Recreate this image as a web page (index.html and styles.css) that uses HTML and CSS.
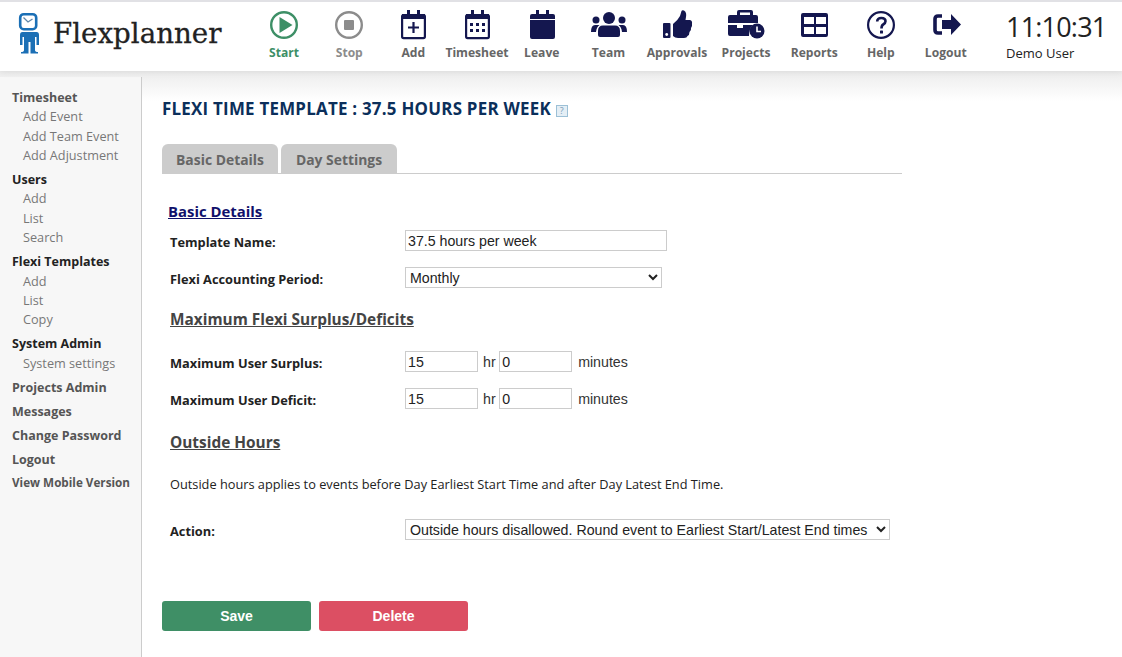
FILE: index.html
```html
<!DOCTYPE html>
<html lang="en">
<head>
<meta charset="utf-8">
<title>Flexplanner</title>
<link rel="stylesheet" href="styles.css">
</head>
<body>
<header class="topbar">
  <div class="brand">
    <svg class="logo" width="22" height="42" viewBox="0 0 22 42">
      <rect x="2.200" y="2.200" width="16" height="15" rx="3.500" fill="#fff" stroke="#1b6fb5" stroke-width="2.600"/>
      <path d="M5.500 5.500 L10 10 L14.500 7" stroke="#5f86a8" stroke-width="1.300" fill="none"/>
      <path d="M4.500 20H18.500Q21 20 21 23V33H18.500V25H17V38Q17 40 20 40V41.500H12.500V30H10.500V41.500H3V40Q6 40 6 38V25H4.500V33H2V23Q2 20 4.500 20Z" fill="#1b6fb5"/>
    </svg>
    <span class="brand-name">Flexplanner</span>
  </div>
  <nav class="mainnav">
    <a class="nav-item start"><svg viewBox="0 0 38 30"><circle cx="19" cy="15" r="12.800" fill="none" stroke="#3d8f66" stroke-width="2.400"/><path d="M14.500 7L27.500 15 14.500 23Z" fill="#3d8f66"/></svg><span>Start</span></a>
    <a class="nav-item stop"><svg viewBox="0 0 38 30"><circle cx="19" cy="15" r="12.800" fill="none" stroke="#8c8c8c" stroke-width="2.400"/><rect x="14" y="10" width="10" height="10" rx="1" fill="#8c8c8c"/></svg><span>Stop</span></a>
    <a class="nav-item"><svg viewBox="0 0 38 30"><path d="M13 0h3v5h-3zM23 0h3v5h-3z" fill="#14174f"/><rect x="8.100" y="5.100" width="22.800" height="23" rx="1.500" fill="none" stroke="#14174f" stroke-width="2.200"/><path d="M8 4h23v5H8z" fill="#14174f"/><path d="M19.500 12v11M14 17.500h11" stroke="#14174f" stroke-width="2.200"/></svg><span>Add</span></a>
    <a class="nav-item"><svg viewBox="0 0 38 30"><path d="M13 0h3v5h-3zM23 0h3v5h-3z" fill="#14174f"/><rect x="8.100" y="5.100" width="22.800" height="23" rx="1.500" fill="none" stroke="#14174f" stroke-width="2.200"/><path d="M8 4h23v5H8z" fill="#14174f"/><path d="M12 13h3v3h-3zM18 13h3v3h-3zM24 13h3v3h-3zM12 19h3v3h-3zM18 19h3v3h-3zM24 19h3v3h-3z" fill="#14174f"/></svg><span>Timesheet</span></a>
    <a class="nav-item"><svg viewBox="0 0 38 30"><path d="M13 0h3v5h-3zM23 0h3v5h-3z" fill="#14174f"/><path d="M9 4h21a2 2 0 0 1 2 2v3H7V6a2 2 0 0 1 2-2z" fill="#14174f"/><path d="M7 10h25v17a2 2 0 0 1-2 2H9a2 2 0 0 1-2-2z" fill="#14174f"/></svg><span>Leave</span></a>
    <a class="nav-item"><svg viewBox="0 0 38 30"><circle cx="19" cy="8" r="6" fill="#14174f"/><circle cx="6" cy="10" r="3.500" fill="#14174f"/><circle cx="32" cy="10" r="3.500" fill="#14174f"/><path d="M10 27Q8 27 8 25V21Q8 15.500 13 15.500H25Q30 15.500 30 21V25Q30 27 28 27Z" fill="#14174f"/><path d="M1 22Q1 15 5 15H9.500Q6.500 17 6 22ZM37 22Q37 15 33 15H28.500Q31.500 17 32 22Z" fill="#14174f"/></svg><span>Team</span></a>
    <a class="nav-item"><svg viewBox="0 0 38 30"><rect x="5" y="13" width="7.500" height="15" rx="1" fill="#14174f"/><circle cx="8.700" cy="24.500" r="1.400" fill="#fff"/><path d="M15 14Q20 10 22 6L23.500 1Q24 0 26 .5 29.500 2 27.500 10H32Q34.500 10.500 34 14 34.500 16 33 18 33.500 20.500 31.500 22 31.500 25 29.500 26 29 28 26 28H20Q17 28 15 26Z" fill="#14174f"/></svg><span>Approvals</span></a>
    <a class="nav-item"><svg viewBox="0 0 38 30"><path d="M10 5V2Q10 0 12 0H24Q26 0 26 2V5H29Q31 5 31 7V13H1V7Q1 5 3 5ZM13 5H23V2.500H13Z" fill="#14174f" fill-rule="evenodd"/><path d="M1 15H10V18H16V15H26Q22 18 22 26H3Q1 26 1 24Z" fill="#14174f"/><circle cx="30" cy="21" r="7.500" fill="#14174f"/><path d="M30 16.500V21.500H34" stroke="#fff" stroke-width="1.600" fill="none"/></svg><span>Projects</span></a>
    <a class="nav-item"><svg viewBox="0 0 38 30"><path d="M8 3H31Q33 3 33 5V25Q33 27 31 27H8Q6 27 6 25V5Q6 3 8 3ZM9 7V14H19V7ZM21 7V14H31V7ZM9 17V24H19V17ZM21 17V24H31V17Z" fill="#14174f" fill-rule="evenodd"/></svg><span>Reports</span></a>
    <a class="nav-item"><svg viewBox="0 0 38 30"><circle cx="19" cy="15" r="12.900" fill="none" stroke="#14174f" stroke-width="2.200"/><path d="M15.200 11.500Q15.200 8 19.300 8 23.500 8 23.500 11.300 23.500 13.300 21.200 14.500 19.500 15.400 19.500 18.500" fill="none" stroke="#14174f" stroke-width="2.600"/><rect x="18" y="20.500" width="3" height="3" rx=".6" fill="#14174f"/></svg><span>Help</span></a>
    <a class="nav-item"><svg viewBox="0 0 38 30"><path d="M15 6H11Q8 6 8 9V20Q8 23 11 23H15" fill="none" stroke="#14174f" stroke-width="3.600"/><path d="M15 10H24V4L34 14.500 24 25V19H15Z" fill="#14174f"/></svg><span>Logout</span></a>
  </nav>
  <div class="clock">
    <div class="time">11:10:31</div>
    <div class="user">Demo User</div>
  </div>
</header>

<div class="shell">
  <aside class="sidebar">
    <div class="group"><a class="head muted">Timesheet</a><a>Add Event</a><a>Add Team Event</a><a>Add Adjustment</a></div>
    <div class="group"><a class="head">Users</a><a>Add</a><a>List</a><a>Search</a></div>
    <div class="group"><a class="head">Flexi Templates</a><a>Add</a><a>List</a><a>Copy</a></div>
    <div class="group"><a class="head">System Admin</a><a>System settings</a></div>
    <div class="group"><a class="head muted">Projects Admin</a></div>
    <div class="group"><a class="head muted">Messages</a></div>
    <div class="group"><a class="head muted">Change Password</a></div>
    <div class="group last-link"><a class="head muted">Logout</a></div>
    <div class="group"><a class="head muted small">View Mobile Version</a></div>
  </aside>

  <main class="content">
    <h1 class="title">FLEXI TIME TEMPLATE : 37.5 HOURS PER WEEK <span class="qmark">?</span></h1>
    <div class="tabs">
      <a class="tab">Basic Details</a>
      <a class="tab">Day Settings</a>
    </div>
    <form class="form">
      <h2 class="sec-basic">Basic Details</h2>
      <div class="row r-name"><label>Template Name:</label><input class="text name" type="text" value="37.5 hours per week"></div>
      <div class="row r-period"><label>Flexi Accounting Period:</label><select class="period"><option>Monthly</option></select></div>
      <h3 class="sec sec-max">Maximum Flexi Surplus/Deficits</h3>
      <div class="row r-sur"><label>Maximum User Surplus:</label><input class="text num" type="text" value="15"><span class="unit">hr</span><input class="text num" type="text" value="0"><span class="unit min">minutes</span></div>
      <div class="row r-def"><label>Maximum User Deficit:</label><input class="text num" type="text" value="15"><span class="unit">hr</span><input class="text num" type="text" value="0"><span class="unit min">minutes</span></div>
      <h3 class="sec sec-out">Outside Hours</h3>
      <p class="note">Outside hours applies to events before Day Earliest Start Time and after Day Latest End Time.</p>
      <div class="row r-action"><label>Action:</label><select class="action"><option>Outside hours disallowed. Round event to Earliest Start/Latest End times</option></select></div>
      <div class="buttons">
        <button type="button" class="btn save">Save</button>
        <button type="button" class="btn delete">Delete</button>
      </div>
    </form>
  </main>
</div>
</body>
</html>
```

FILE: styles.css
```css
* { box-sizing: border-box; }
html, body { margin: 0; height: 100%; }
body {
  font-family: "Open Sans", "Noto Sans", sans-serif;
  background: #fff;
  color: #222;
  overflow: hidden;
}
.topbar {
  height: 71px;
  border-top: 2px solid #e1e1e5;
  background: #fff;
  display: flex;
  position: relative;
  z-index: 2;
  box-shadow: 0 2px 6px rgba(0,0,0,.06);
}
.brand { width: 251px; display: flex; align-items: flex-start; padding: 10px 0 0 18px; }
.logo { display: block; flex: none; }
.brand-name {
  font-family: "DejaVu Serif", serif;
  font-size: 27.700px;
  line-height: 38px;
  color: #222;
  margin: 3px 0 0 13px;
  -webkit-text-stroke: .3px #222;
}
.mainnav {
  width: 727px;
  display: grid;
  grid-template-columns: 66px 64.5px 63.5px 64px 65.5px 68px 69px 69px 67.5px 65.5px 64.5px;
}
.nav-item {
  display: flex;
  flex-direction: column;
  align-items: center;
  padding-top: 8px;
  font-size: 12.100px;
  font-weight: 700;
  color: #666;
  line-height: 17px;
}
.nav-item svg { width: 38px; height: 30px; display: block; margin-bottom: 4px; flex: none; }
.start { color: #3d8f66; }
.stop { color: #8c8c8c; }
.clock { padding: 8px 0 0 28px; color: #222; }
.time { font-size: 27px; line-height: 34px; letter-spacing: -.8px; }
.user { font-size: 13px; line-height: 18px; margin-top: 0; }

.shell {
  display: flex;
  height: 586px;
  background: linear-gradient(#ececec, #fff 30px);
}
.sidebar {
  width: 142px;
  margin-top: 6px;
  padding: 11px 0 0 12px;
  background: #f7f7f7;
  border-right: 1px solid #ccc;
  font-size: 12.700px;
  color: #777;
  line-height: 19.33px;
}
.group { margin-bottom: 4.8px; }
.group.last-link { margin-bottom: 4px; }
.sidebar a { display: block; padding-left: 11px; }
.sidebar a.head { padding-left: 0; font-weight: 700; color: #222; font-size: 12.500px; }
.sidebar a.head.muted { color: #555; }
.sidebar a.head.small { font-size: 11.700px; }

.content { padding: 26px 0 0 20px; width: 760px; }
.title {
  margin: 0;
  font-size: 16.900px;
  line-height: 24px;
  font-weight: 700;
  color: #0b2f5b;
  letter-spacing: .25px;
}
.qmark {
  display: inline-block;
  width: 12px; height: 12px;
  border: 1px solid #9cc0d6;
  background: #e4eef5;
  color: #7a9bb5;
  font-size: 9px;
  line-height: 10px;
  text-align: center;
  font-weight: 400;
  letter-spacing: 0;
  vertical-align: 1.5px;
}
.tabs {
  margin-top: 23px;
  display: flex;
  gap: 3px;
  border-bottom: 1px solid #ccc;
  height: 30px;
}
.tab {
  width: 116px;
  height: 29px;
  background: #ccc;
  border-radius: 6px 6px 0 0;
  color: #666;
  font-weight: 700;
  font-size: 13.900px;
  line-height: 31px;
  text-align: center;
}
.form { padding: 0 0 0 8px; }
.form h2, .form h3 { font-weight: 700; text-decoration: underline; }
.form .sec-basic { font-size: 14.900px; line-height: 22px; color: #10106b; margin: 26px 0 0 -2px; }
.form .sec { font-size: 15.400px; line-height: 22px; color: #444; margin-bottom: 0; }
.row { display: flex; align-items: center; font-size: 12.800px; }
.row label { width: 235px; font-weight: 700; color: #222; line-height: 16px; padding-top: 2px; }
.text, select {
  font-family: "Liberation Sans", Arial, sans-serif;
  font-size: 14.200px;
  color: #222;
  background: #fff;
  border: 1px solid #ccc;
  border-radius: 0;
  height: 21px;
  outline: 0;
}
.text { padding: 0 2px; }
.name { width: 262px; }
.period { width: 257px; }
.num { width: 73px; }
.unit { font-family: "Liberation Sans", Arial, sans-serif; font-size: 14.200px; color: #333; margin: 0 3.5px 0 5px; }
.unit.min { margin-left: 6px; }
.r-name { margin-top: 8px; }
.r-period { margin-top: 16px; }
.form .sec-max { margin-top: 21px; }
.r-sur { margin-top: 20px; }
.r-def { margin-top: 16px; }
.form .sec-out { margin-top: 23px; }
.note { margin: 21px 0 0; font-size: 12.770px; line-height: 18px; color: #222; }
.r-action { margin-top: 26px; }
.action { width: 485px; }
.buttons { margin: 61px 0 0 -8px; display: flex; gap: 8px; }
.btn {
  width: 149px;
  height: 30px;
  border: 0;
  border-radius: 3px;
  color: #fff;
  font-family: "Liberation Sans", Arial, sans-serif;
  font-weight: 700;
  font-size: 14px;
}
.save { background: #3f8f66; }
.delete { background: #dc4f63; }
```
